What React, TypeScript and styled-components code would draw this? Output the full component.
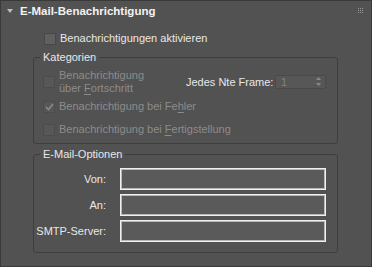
import React from 'react';
import styled, { createGlobalStyle } from 'styled-components';

const GlobalStyle = createGlobalStyle`
  body {
    margin: 0;
    background: #525252;
    font-family: 'Liberation Sans', Arial, sans-serif;
    font-size: 11px;
    color: #e8e8e8;
  }
`;

const Panel = styled.div`
  width: 372px;
  height: 267px;
  box-sizing: border-box;
  border: 1px solid #3a3a3a;
  background: #525252;
  display: flex;
  flex-direction: column;
`;

const Header = styled.div`
  height: 20px;
  display: flex;
  align-items: center;
  padding: 0 8px 0 6px;
  gap: 7px;
`;

const Title = styled.div`
  font-weight: bold;
  font-size: 11.5px;
  color: #f2f2f2;
`;

const Grip = styled.svg`
  margin-left: auto;
  margin-top: -2px;
`;

const Body = styled.div`
  padding-left: 32px;
  display: flex;
  flex-direction: column;
`;

const CheckRow = styled.label<{ $width?: number; $disabled?: boolean }>`
  display: flex;
  align-items: center;
  gap: 4px;
  width: ${(p) => (p.$width ? `${p.$width}px` : 'auto')};
  color: ${(p) => (p.$disabled ? '#8c8c8c' : '#e8e8e8')};
  line-height: 13px;
  flex-shrink: 0;
`;

const EnableRow = styled(CheckRow)`
  margin: 11px 0 0 11px;
`;

const Box = styled.span<{ $disabled?: boolean }>`
  width: 12px;
  height: 12px;
  box-sizing: border-box;
  border: 1px solid ${(p) => (p.$disabled ? '#4c4c4c' : '#474747')};
  background: ${(p) => (p.$disabled ? '#575757' : '#606060')};
  display: flex;
  align-items: center;
  justify-content: center;
  flex-shrink: 0;
`;

const WrapText = styled.span`
  max-width: 100px;
`;

const Group = styled.fieldset<{ $top: number }>`
  margin: ${(p) => p.$top}px 0 0 0;
  padding: 0;
  width: 305px;
  box-sizing: border-box;
  border: 1px solid #3e3e3e;
  border-radius: 3px;
  min-width: 0;
`;

const Legend = styled.legend`
  padding: 0 3px;
  margin-left: 6px;
  line-height: 13px;
  color: #e8e8e8;
`;

const CategoryList = styled.div`
  padding: 4px 11px 2px 9px;
`;

const Row = styled.div<{ $height: number }>`
  display: flex;
  align-items: center;
  height: ${(p) => p.$height}px;
`;

const FrameLabel = styled.span`
  color: #e8e8e8;
`;

const Spinner = styled.div`
  margin-left: auto;
  width: 51px;
  height: 14px;
  box-sizing: border-box;
  border: 1px solid #4a4a4a;
  background: #575757;
  color: #828282;
  display: flex;
  align-items: center;
  padding: 0 4px 0 5px;
  justify-content: space-between;
`;

const FieldGrid = styled.div`
  padding: 7px 11px 10px 0;
  display: grid;
  grid-template-columns: 72px 206px;
  column-gap: 14px;
  row-gap: 4px;
  align-items: center;
`;

const FieldLabel = styled.span`
  text-align: right;
  color: #e8e8e8;
`;

const Input = styled.input`
  height: 22px;
  box-sizing: border-box;
  border: 1px solid #f0f0f0;
  box-shadow: inset 0 0 0 1px #b8b8b8;
  background: #5a5a5a;
  outline: none;
  margin: 0;
  padding: 0 4px;
  color: #e8e8e8;
  font: inherit;
`;

const Key = styled.u`
  text-decoration-thickness: 1px;
  text-underline-offset: 2px;
`;

const Check = () => (
  <svg width="9" height="8" viewBox="0 0 9 8">
    <polyline points="1,4 3.5,6.5 8,1" fill="none" stroke="#8a8a8a" strokeWidth="1.6" />
  </svg>
);

export default function App() {
  return (
    <>
      <GlobalStyle />
      <Panel>
        <Header>
          <svg width="6" height="4" viewBox="0 0 6 4">
            <polygon points="0,0 6,0 3,4" fill="#bdbdbd" />
          </svg>
          <Title>E-Mail-Benachrichtigung</Title>
          <Grip width="5" height="5" viewBox="0 0 5 5">
            {[0, 2, 4].map((y) =>
              [0, 2, 4].map((x) => <rect key={`${x}-${y}`} x={x} y={y} width="1" height="1" fill="#9a9a9a" />)
            )}
          </Grip>
        </Header>
        <Body>
          <EnableRow>
            <Box />
            <span>Benachrichtigungen aktivieren</span>
          </EnableRow>
          <Group $top={6}>
            <Legend>Kategorien</Legend>
            <CategoryList>
              <Row $height={27}>
                <CheckRow $width={143} $disabled>
                  <Box $disabled />
                  <WrapText>
                    Benachrichtigung über <Key>F</Key>ortschritt
                  </WrapText>
                </CheckRow>
                <FrameLabel>Jedes Nte Frame:</FrameLabel>
                <Spinner>
                  <span>1</span>
                  <svg width="5" height="9" viewBox="0 0 5 9">
                    <polygon points="0,3 5,3 2.5,0" fill="#8a8a8a" />
                    <polygon points="0,6 5,6 2.5,9" fill="#8a8a8a" />
                  </svg>
                </Spinner>
              </Row>
              <Row $height={23}>
                <CheckRow $disabled>
                  <Box $disabled>
                    <Check />
                  </Box>
                  <span>
                    Benachrichtigung bei Fe<Key>h</Key>ler
                  </span>
                </CheckRow>
              </Row>
              <Row $height={23}>
                <CheckRow $disabled>
                  <Box $disabled />
                  <span>
                    Benachrichtigung bei <Key>F</Key>ertigstellung
                  </span>
                </CheckRow>
              </Row>
            </CategoryList>
          </Group>
          <Group $top={4}>
            <Legend>E-Mail-Optionen</Legend>
            <FieldGrid>
              <FieldLabel>Von:</FieldLabel>
              <Input />
              <FieldLabel>An:</FieldLabel>
              <Input />
              <FieldLabel>SMTP-Server:</FieldLabel>
              <Input />
            </FieldGrid>
          </Group>
        </Body>
      </Panel>
    </>
  );
}
